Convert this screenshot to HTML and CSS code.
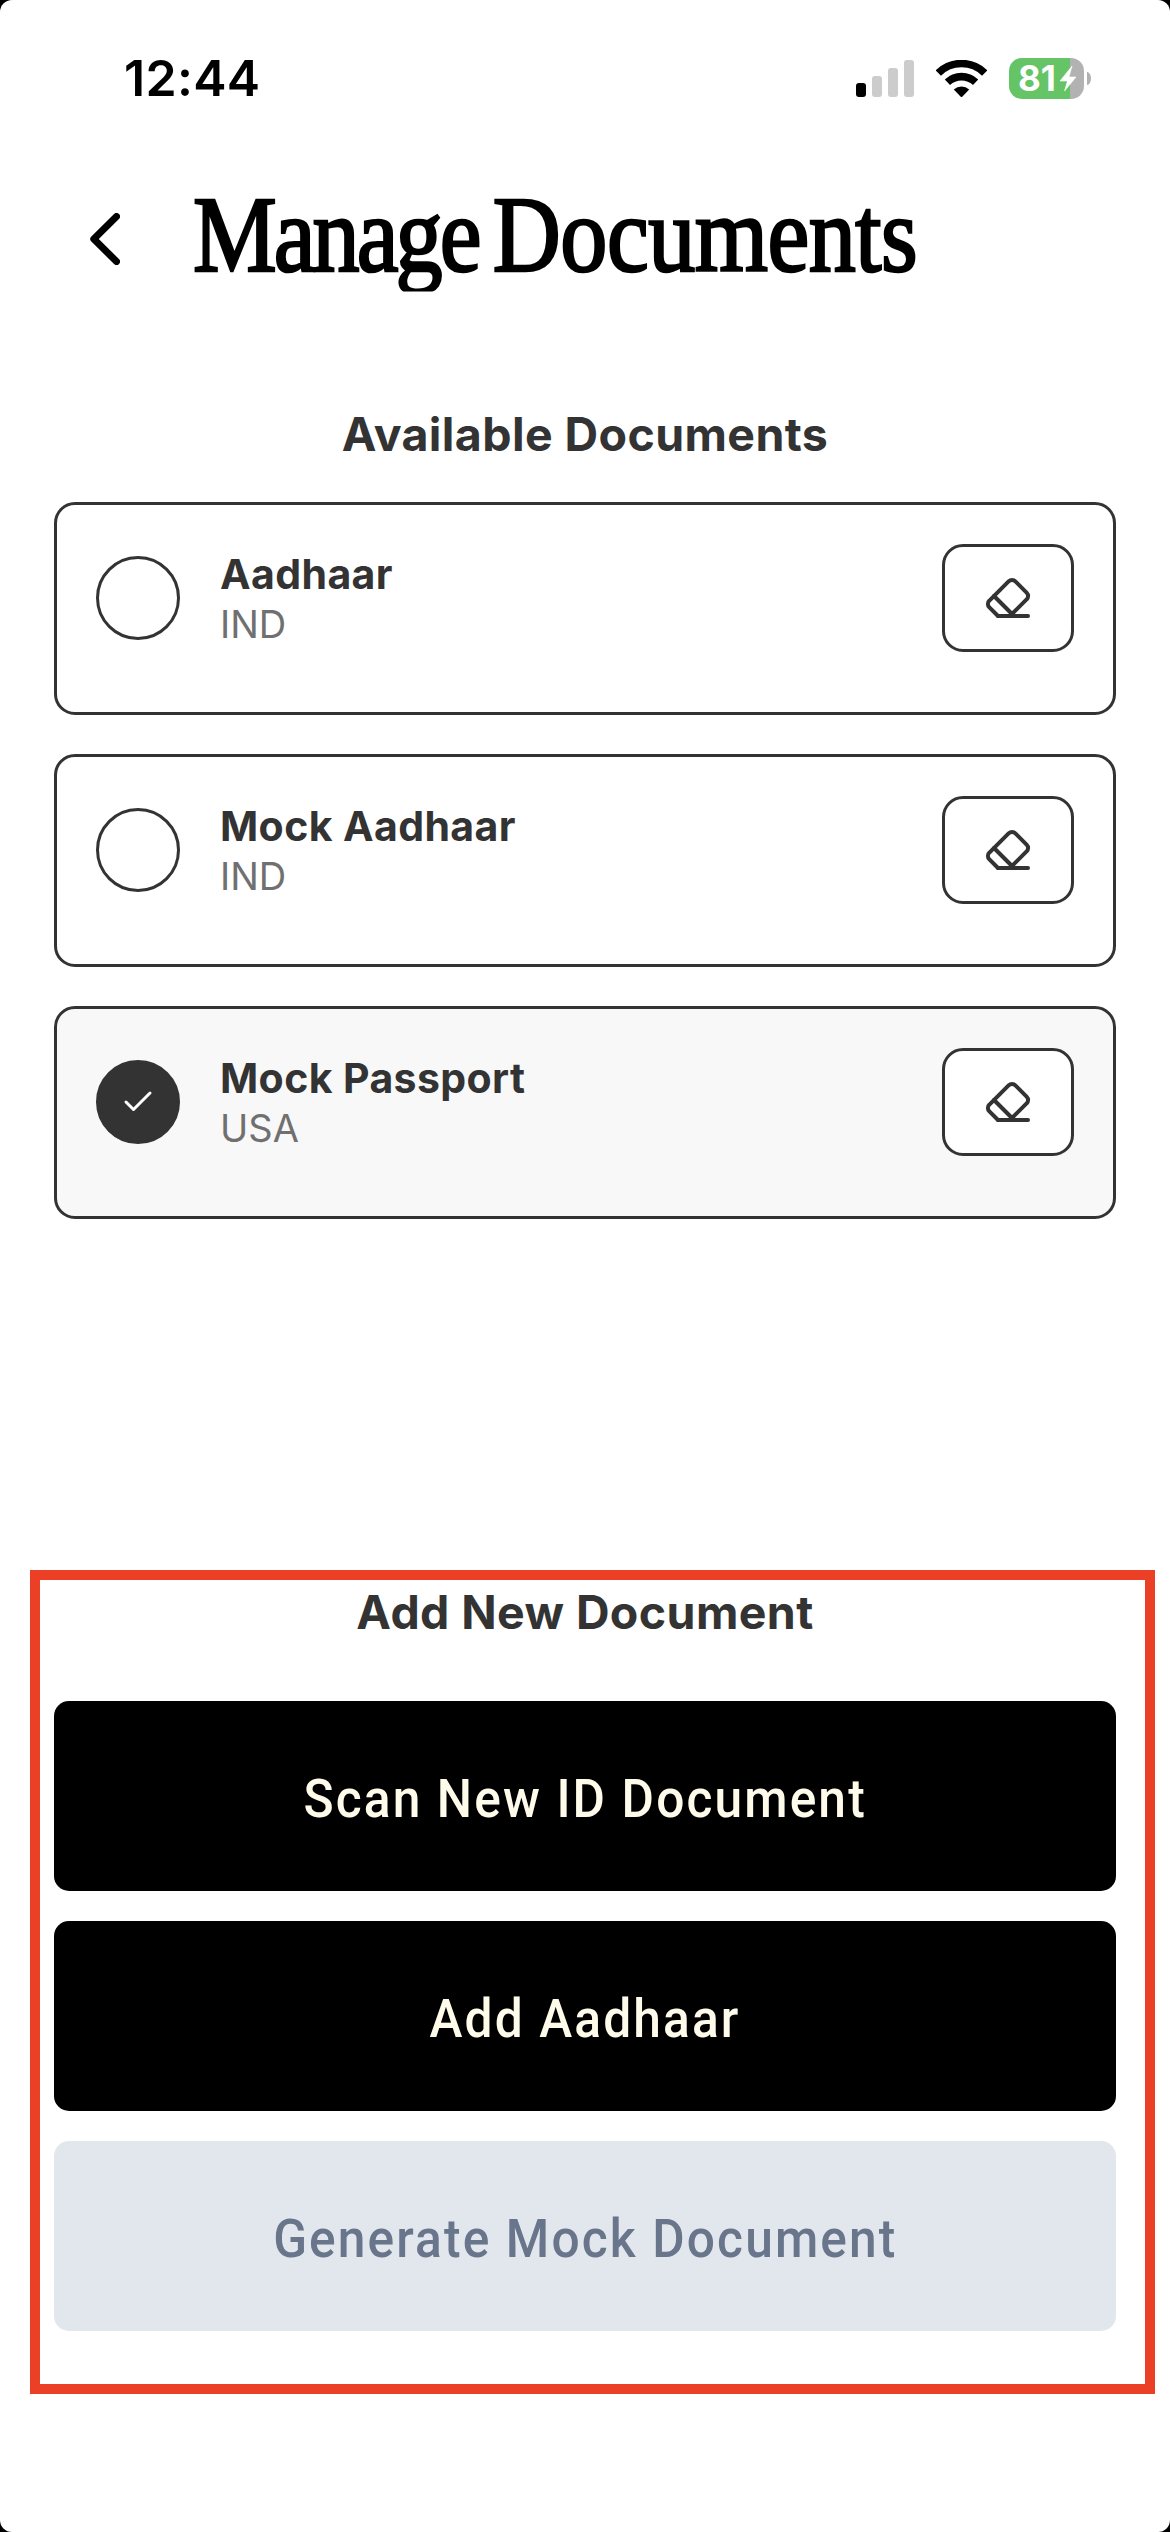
FILE: index.html
```html
<!DOCTYPE html>
<html lang="en">
<head>
<meta charset="utf-8">
<title>Manage Documents</title>
<link rel="stylesheet" href="styles.css">
</head>
<body>
<svg class="symbols" aria-hidden="true">
  <symbol id="eraser" viewBox="0 0 24 24">
    <path d="m7 21-4.3-4.3c-1-1-1-2.5 0-3.4l9.6-9.6c1-1 2.5-1 3.4 0l5.6 5.6c1 1 1 2.5 0 3.4L13 21"/>
    <path d="M22 21H7"/>
    <path d="m5 11 9 9"/>
  </symbol>
</svg>
<main class="screen">
  <div class="status-bar">
    <span class="time">12:44</span>
    <div class="indicators">
      <svg class="signal" viewBox="0 0 58 37">
        <rect x="0" y="23" width="10" height="14" rx="3"/>
        <rect class="off" x="16" y="16" width="10" height="21" rx="3"/>
        <rect class="off" x="32" y="8" width="10" height="29" rx="3"/>
        <rect class="off" x="48" y="0" width="10" height="37" rx="3"/>
      </svg>
      <svg class="wifi" viewBox="0 0 51 37">
        <path class="arc" d="M2.3 13A33.2 33.2 0 0 1 48.7 13"/>
        <path class="arc" d="M11.4 22.2A20.5 20.5 0 0 1 39.6 22.2"/>
        <path d="M25.5 37.5 17.8 29.4A11.5 11.5 0 0 1 33.2 29.4Z"/>
      </svg>
      <div class="battery">
        <div class="battery-body">
          <span class="battery-level">81</span>
          <svg class="bolt" viewBox="0 0 16 25"><path d="M12 0 0 15H7.5L4.5 25 16 11H9Z"/></svg>
        </div>
        <div class="battery-cap"></div>
      </div>
    </div>
  </div>

  <header class="header">
    <svg class="back" viewBox="0 0 30 52"><path d="M26.5 3.5 3.8 26 26.5 48.5"/></svg>
    <h1 class="title"><span class="tight">Manage</span> Documents</h1>
  </header>

  <section class="available">
    <h2 class="section-title">Available Documents</h2>
    <div class="cards">
      <article class="card">
        <span class="radio"></span>
        <div class="info"><span class="name">Aadhaar</span><span class="country">IND</span></div>
        <button class="erase"><svg class="erase-icon"><use href="#eraser"/></svg></button>
      </article>
      <article class="card">
        <span class="radio"></span>
        <div class="info"><span class="name">Mock Aadhaar</span><span class="country">IND</span></div>
        <button class="erase"><svg class="erase-icon"><use href="#eraser"/></svg></button>
      </article>
      <article class="card selected">
        <span class="radio"><svg class="check" viewBox="0 0 24 24"><path d="M20 6 9 17l-5-5"/></svg></span>
        <div class="info"><span class="name">Mock Passport</span><span class="country">USA</span></div>
        <button class="erase"><svg class="erase-icon"><use href="#eraser"/></svg></button>
      </article>
    </div>
  </section>

  <section class="add-new">
    <h2 class="section-title">Add New Document</h2>
    <div class="actions">
      <button class="action"><span class="label">Scan New ID Document</span></button>
      <button class="action"><span class="label">Add Aadhaar</span></button>
      <button class="action secondary"><span class="label">Generate Mock Document</span></button>
    </div>
  </section>
</main>
</body>
</html>
```

FILE: styles.css
```css
* { box-sizing: border-box; margin: 0; }

body {
  background: #000;
  font-family: Inter, "Liberation Sans", sans-serif;
}

button { padding: 0; border: 0; font: inherit; }

.symbols { display: none; }

.screen {
  width: 1170px;
  height: 2532px;
  display: flex;
  flex-direction: column;
  background: #fff;
  border-radius: 12px;
  overflow: hidden;
}

/* Status bar */
.status-bar {
  height: 156px;
  padding: 0 79px 0 124px;
  display: flex;
  justify-content: space-between;
  align-items: center;
}
.time {
  font-size: 50px;
  font-weight: 600;
  line-height: 60px;
  letter-spacing: 0.3px;
  color: #000;
}
.indicators { display: flex; align-items: center; }
.signal { width: 58px; height: 37px; }
.signal .off { fill: #ccc; }
.wifi { width: 51px; height: 37px; margin-left: 22px; }
.wifi .arc { fill: none; stroke: #000; stroke-width: 7.6; }
.battery { display: flex; align-items: center; gap: 3px; margin-left: 22px; }
.battery-body {
  width: 75px;
  height: 41px;
  padding-left: 9px;
  display: flex;
  align-items: center;
  gap: 1px;
  border-radius: 13px;
  background: linear-gradient(90deg, #65c466 61px, #b2b2b2 61px);
}
.battery-level {
  width: 41px;
  font-size: 35px;
  font-weight: 700;
  line-height: 41px;
  color: #fff;
}
.bolt { width: 16px; height: 25px; fill: #fff; overflow: visible; stroke: #fff; stroke-width: 0.6; stroke-linejoin: round; }
.battery-cap { width: 4px; height: 13px; border-radius: 0 4px 4px 0 / 0 7px 7px 0; background: #b2b2b2; }

/* Header */
.header {
  height: 166px;
  padding-left: 90px;
  display: flex;
  align-items: center;
}
.back { width: 30px; height: 52px; fill: none; stroke: #000; stroke-width: 7; stroke-linecap: round; stroke-linejoin: round; }
.title {
  height: 135px;
  margin: -10px 0 0 73px;
  font-family: "Liberation Serif", serif;
  font-size: 108px;
  font-weight: 400;
  line-height: 135px;
  letter-spacing: -0.6px;
  word-spacing: -10px;
  white-space: nowrap;
  color: #000;
  -webkit-text-stroke: 2.6px #000;
  transform: scaleX(0.872);
  transform-origin: left center;
  clip-path: inset(0 -10px 10px -10px);
}
.tight { letter-spacing: -3.4px; }

/* Document list */
.available { padding: 82px 54px 0; }
.section-title {
  height: 60px;
  font-size: 46.5px;
  font-weight: 700;
  line-height: 60px;
  letter-spacing: 0.4px;
  text-align: center;
  color: #333;
}
.cards { margin-top: 38px; display: flex; flex-direction: column; gap: 39px; }
.card {
  height: 213px;
  padding: 39px 39px 60px;
  display: flex;
  align-items: center;
  border: 3px solid #333;
  border-radius: 21px;
  background: #fff;
}
.selected { background: #f8f8f8; }
.radio {
  width: 84px;
  height: 84px;
  display: grid;
  place-items: center;
  border: 3px solid #333;
  border-radius: 50%;
}
.selected .radio { background: #333; }
.check { width: 36px; height: 36px; fill: none; stroke: #fff; stroke-width: 2; stroke-linecap: round; stroke-linejoin: round; }
.info { margin-left: 40px; flex: 1; display: flex; flex-direction: column; }
.name { font-size: 41px; font-weight: 700; line-height: 51px; letter-spacing: 0.4px; color: #333; }
.country { font-size: 38px; font-weight: 400; line-height: 48px; color: #707070; }
.erase {
  width: 132px;
  height: 108px;
  display: grid;
  place-items: center;
  border: 3px solid #333;
  border-radius: 21px;
  background: #fff;
}
.erase-icon { width: 48px; height: 48px; fill: none; stroke: #333; stroke-width: 2; stroke-linecap: round; stroke-linejoin: round; }

/* Highlighted actions */
.add-new {
  height: 824px;
  margin: 351px 15px 0 30px;
  padding: 2px 29px 0 14px;
  border: 10px solid #eb4026;
}
.actions { margin-top: 59px; display: flex; flex-direction: column; gap: 30px; }
.action {
  height: 190px;
  padding-top: 5px;
  border-radius: 15px;
  background: #000;
  color: #fffbeb;
  font-family: Roboto, sans-serif;
  font-size: 54px;
  font-weight: 500;
  letter-spacing: 2.3px;
}
.label { display: inline-block; transform: scaleX(0.92); }
.secondary { background: #e2e7ee; color: #68758b; }
```
